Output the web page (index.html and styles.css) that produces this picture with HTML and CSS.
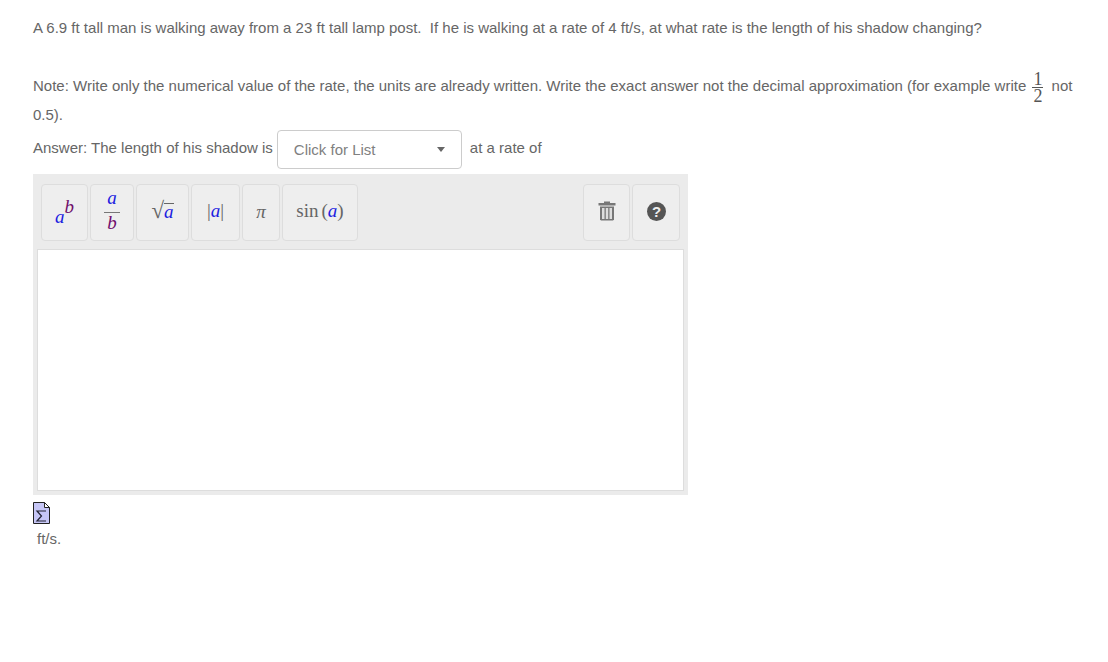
FILE: index.html
```html
<!DOCTYPE html>
<html lang="en">
<head>
    <meta charset="UTF-8">
    <meta name="viewport" content="width=device-width, initial-scale=1.0">
    <title>Shadow rate question</title>
    <link rel="stylesheet" href="styles.css">
</head>
<body>
    <div class="question">
        <p class="problem">A 6.9 ft tall man is walking away from a 23 ft tall lamp post.&nbsp; If he is walking at a rate of 4 ft/s, at what rate is the length of his shadow changing?</p>

        <p class="note">Note: Write only the numerical value of the rate, the units are already written. Write the exact answer not the decimal approximation (for example write <span class="frac"><span class="frac-top">1</span><span class="frac-bottom">2</span></span> not 0.5).</p>

        <div class="answer">
            <span class="answer-text">Answer: The length of his shadow is</span>
            <div class="select">
                <span>Click for List</span>
                <span class="caret"></span>
            </div>
            <span class="answer-text">at a rate of</span>
        </div>

        <!-- Equation editor -->
        <div class="editor">
            <div class="toolbar">
                <div class="tools">
                    <button class="tool tool-pow"><span class="base">a</span><span class="exp">b</span></button>
                    <button class="tool tool-frac"><span class="num">a</span><span class="den">b</span></button>
                    <button class="tool tool-sqrt"><span class="radical">√</span><span class="radicand">a</span></button>
                    <button class="tool tool-abs">|<span class="var">a</span>|</button>
                    <button class="tool tool-pi">π</button>
                    <button class="tool tool-sin">sin<span class="paren">(</span><span class="var">a</span><span>)</span></button>
                </div>
                <div class="tools">
                    <button class="tool tool-trash">
                        <svg width="18" height="20" viewBox="0 0 18 20">
                            <path d="M6 2V.5h6V2h5.500v2.500H.5V2z" fill="#777"/>
                            <path d="M2 5.500h14V18.500l-1 1H3l-1-1z" fill="#777"/>
                            <path d="M4 7h2.500v11H4zM7.800 7h2.400v11H7.800zM11.500 7H14v11h-2.500z" fill="#ddd"/>
                        </svg>
                    </button>
                    <button class="tool tool-help">
                        <svg width="19" height="19" viewBox="0 0 19 19">
                            <circle cx="9.500" cy="9.500" r="9.500" fill="#555"/>
                            <text x="9.500" y="15" text-anchor="middle" class="help-mark">?</text>
                        </svg>
                    </button>
                </div>
            </div>
            <div class="input-area"></div>
        </div>

        <svg class="doc-icon" width="17" height="22" viewBox="0 0 17 22">
            <path d="M.5.5h11l5 5v16H.5z" fill="#c6c6f6" stroke="#222"/>
            <path d="M11.500.5v5h5z" fill="#fff" stroke="#222"/>
            <path d="M13 9H4l4.500 5L4 19h9" fill="none" stroke="#223" stroke-width="1.200"/>
        </svg>

        <p class="units">ft/s.</p>
    </div>
</body>
</html>
```

FILE: styles.css
```css
body {
    font-family: 'Liberation Sans', Arial, sans-serif;
    font-size: 15px;
    margin: 0;
    padding: 0;
    background: #fff;
    color: #666;
}
p {
    margin: 0;
}
.question {
    width: 1042px;
    padding: 19px 0 0 33px;
}
.problem {
    line-height: 18px;
}
.note {
    margin-top: 34px;
    line-height: 29px;
}
.frac {
    display: inline-flex;
    flex-direction: column;
    vertical-align: middle;
    font-family: 'Liberation Serif', serif;
    font-size: 18px;
    line-height: 14px;
    text-align: center;
    margin: -6px 4px -6px 2px;
    color: #555;
}
.frac-top {
    border-bottom: 1px solid #555;
    padding: 0 1px 1px;
}
.frac-bottom {
    padding-top: 1px;
}
.answer {
    display: flex;
    align-items: center;
    gap: 4px;
    margin-top: 1px;
}
.answer-text {
    padding-bottom: 5px;
}
.select {
    display: flex;
    align-items: center;
    justify-content: space-between;
    box-sizing: border-box;
    width: 185px;
    height: 39px;
    padding: 2px 16px;
    margin-right: 4px;
    border: 1px solid #ccc;
    border-radius: 4px;
    color: #808080;
}
.caret {
    width: 0;
    height: 0;
    border-left: 4px solid transparent;
    border-right: 4px solid transparent;
    border-top: 5px solid #666;
}
.editor {
    box-sizing: border-box;
    width: 655px;
    height: 321px;
    margin-top: 5px;
    padding: 0 4px 4px;
    background: #ebebeb;
    display: flex;
    flex-direction: column;
}
.toolbar {
    display: flex;
    justify-content: space-between;
    padding: 10px 4px 0;
    height: 75px;
    box-sizing: border-box;
}
.tools {
    display: flex;
    gap: 2px;
}
.tool {
    box-sizing: border-box;
    height: 57px;
    padding: 0 0 4px;
    background: #eee;
    border: 1px solid #ddd;
    border-radius: 4px;
    font-family: 'Liberation Serif', serif;
    font-size: 19px;
    color: #666;
    cursor: pointer;
    display: flex;
    align-items: center;
    justify-content: center;
}
.var, .base, .num, .radicand {
    color: #2020e0;
    font-style: italic;
}
.exp, .den {
    color: #70106c;
    font-style: italic;
}
.tool-pow { width: 47px; }
.tool-frac { width: 44px; flex-direction: column; padding-bottom: 4px; }
.tool-sqrt { width: 53px; }
.tool-abs { width: 49px; }
.tool-pi { width: 38px; font-style: italic; padding-bottom: 2px; }
.tool-sin { width: 76px; }
.tool-trash { width: 47px; }
.tool-help { width: 48px; padding-bottom: 2px; }
.base {
    margin-top: 12px;
}
.exp {
    margin-bottom: 8px;
}
.num, .den {
    line-height: 18px;
}
.num {
    border-bottom: 1px solid #777;
    padding: 0 3px 5px;
}
.den {
    padding-top: 1px;
}
.radical {
    font-size: 23px;
    line-height: 20px;
}
.radicand {
    border-top: 1px solid #666;
    line-height: 15px;
}
.paren {
    margin-left: 3px;
}
.help-mark {
    font-family: 'Liberation Sans', Arial, sans-serif;
    font-size: 15px;
    font-weight: bold;
    fill: #eee;
}
.input-area {
    flex: 1;
    background: #fff;
    border: 1px solid #ddd;
}
.doc-icon {
    display: block;
    margin-top: 7px;
}
.units {
    margin: 6px 0 0 4px;
    line-height: 18px;
}
```
